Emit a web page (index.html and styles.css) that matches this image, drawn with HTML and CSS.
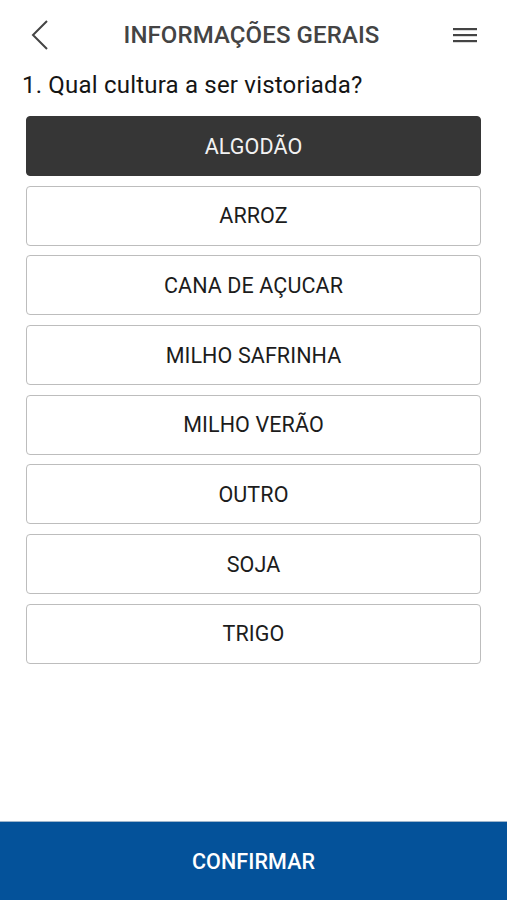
FILE: index.html
```html
<!DOCTYPE html>
<html lang="pt">
<head>
    <meta charset="UTF-8">
    <meta name="viewport" content="width=device-width, initial-scale=1.0">
    <title>Informações Gerais</title>
    <link rel="stylesheet" href="styles.css">
</head>
<body>

    <header class="top-bar">
        <button class="icon-btn back-btn" aria-label="Voltar">
            <svg width="20" height="32" viewBox="0 0 20 32">
                <polyline points="17,2 3,16 17,30" fill="none" stroke="#444" stroke-width="2"/>
            </svg>
        </button>
        <h1 class="title">INFORMAÇÕES GERAIS</h1>
        <button class="icon-btn menu-btn" aria-label="Menu">
            <svg width="24" height="16" viewBox="0 0 24 16">
                <rect x="0" y="1" width="24" height="2.2" fill="#444"/>
                <rect x="0" y="7" width="24" height="2.2" fill="#444"/>
                <rect x="0" y="13" width="24" height="2.2" fill="#444"/>
            </svg>
        </button>
    </header>

    <main class="content">
        <p class="question">1. Qual cultura a ser vistoriada?</p>

        <div class="options">
            <button class="option selected">ALGODÃO</button>
            <button class="option">ARROZ</button>
            <button class="option">CANA DE AÇUCAR</button>
            <button class="option">MILHO SAFRINHA</button>
            <button class="option">MILHO VERÃO</button>
            <button class="option">OUTRO</button>
            <button class="option">SOJA</button>
            <button class="option">TRIGO</button>
        </div>
    </main>

    <footer class="bottom-bar">
        <button class="confirm-btn">CONFIRMAR</button>
    </footer>

</body>
</html>
```

FILE: styles.css
```css
* {
    box-sizing: border-box;
}

body {
    font-family: Roboto, "Noto Sans", Arial, sans-serif;
    margin: 0;
    padding: 0;
    background: #fff;
    height: 900px;
    display: flex;
    flex-direction: column;
}

.top-bar {
    height: 70px;
    display: flex;
    align-items: center;
    justify-content: space-between;
    padding: 0 30px 0 30px;
}

.icon-btn {
    background: none;
    border: none;
    padding: 0;
    display: flex;
    align-items: center;
}

.back-btn {
    margin-top: 0;
}

.menu-btn {
    margin-top: 0;
}

.title {
    font-size: 24px;
    font-weight: 500;
    color: #444;
    margin: 0;
    letter-spacing: 0.1px;
}

.content {
    flex: 1;
    padding: 0 26px;
}

.question {
    margin: 0 0 16px -4px;
    font-size: 24px;
    line-height: 30px;
    color: #151515;
    letter-spacing: 0.2px;
}

.options {
    display: flex;
    flex-direction: column;
    gap: 9.7px;
}

.option {
    height: 60px;
    width: 100%;
    background: #fff;
    border: 1.5px solid #bdbdbd;
    border-radius: 4px;
    font-family: inherit;
    font-size: 21.5px;
    color: #1c1c1c;
    letter-spacing: 0.1px;
}

.option.selected {
    background: #363636;
    border-color: #363636;
    color: #f2f2f2;
}

.bottom-bar {
    height: 79px;
    background: #04529a;
    border-top: 1px solid #9fb6cc;
    display: flex;
    align-items: center;
    justify-content: center;
}

.confirm-btn {
    background: none;
    border: none;
    font-family: inherit;
    font-size: 21.5px;
    font-weight: 500;
    color: #fff;
    letter-spacing: 0.1px;
}
```
